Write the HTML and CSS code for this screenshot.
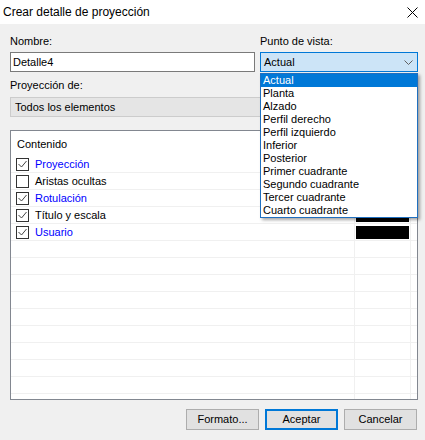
FILE: index.html
```html
<!DOCTYPE html>
<html lang="es">
<head>
<meta charset="utf-8">
<title>Crear detalle de proyección</title>
<link rel="stylesheet" href="styles.css">
</head>
<body>
<div class="window">
  <div class="titlebar">
    <span class="title">Crear detalle de proyección</span>
    <svg class="close" width="11" height="11" viewBox="0 0 11 11"><path d="M0.5 0.5 L10.5 10.5 M10.5 0.5 L0.5 10.5" stroke="#000" stroke-width="1" fill="none"/></svg>
  </div>
  <div class="form">
    <div class="toprow">
      <div class="field">
        <div class="label">Nombre:</div>
        <div class="textbox">Detalle4</div>
      </div>
      <div class="field">
        <div class="label">Punto de vista:</div>
        <div class="combo">
          <span>Actual</span>
          <svg class="chev" width="9" height="5" viewBox="0 0 9 5"><path d="M0.5 0.5 L4.5 4.5 L8.5 0.5" stroke="#606060" stroke-width="1" fill="none"/></svg>
        </div>
      </div>
    </div>
    <div class="label label2">Proyección de:</div>
    <div class="graybox">Todos los elementos</div>
    <div class="list">
      <div class="listhead">Contenido</div>
      <div class="rows">
        <div class="row"><div class="c1"><span class="cb"><svg width="11" height="11" viewBox="0 0 11 11"><path d="M1.5 5 L4.5 8 L9.5 2" stroke="#444" stroke-width="1" fill="none"/></svg></span><span class="blue">Proyección</span></div><div class="c2"><span class="sw"></span></div><div class="c3"></div></div>
        <div class="row"><div class="c1"><span class="cb"></span><span>Aristas ocultas</span></div><div class="c2"></div><div class="c3"></div></div>
        <div class="row"><div class="c1"><span class="cb"><svg width="11" height="11" viewBox="0 0 11 11"><path d="M1.5 5 L4.5 8 L9.5 2" stroke="#444" stroke-width="1" fill="none"/></svg></span><span class="blue">Rotulación</span></div><div class="c2"><span class="sw"></span></div><div class="c3"></div></div>
        <div class="row"><div class="c1"><span class="cb"><svg width="11" height="11" viewBox="0 0 11 11"><path d="M1.5 5 L4.5 8 L9.5 2" stroke="#444" stroke-width="1" fill="none"/></svg></span><span>Título y escala</span></div><div class="c2"><span class="sw"></span></div><div class="c3"></div></div>
        <div class="row"><div class="c1"><span class="cb"><svg width="11" height="11" viewBox="0 0 11 11"><path d="M1.5 5 L4.5 8 L9.5 2" stroke="#444" stroke-width="1" fill="none"/></svg></span><span class="blue">Usuario</span></div><div class="c2"><span class="sw"></span></div><div class="c3"></div></div>
        <div class="row"><div class="c1"></div><div class="c2"></div><div class="c3"></div></div>
        <div class="row"><div class="c1"></div><div class="c2"></div><div class="c3"></div></div>
        <div class="row"><div class="c1"></div><div class="c2"></div><div class="c3"></div></div>
        <div class="row"><div class="c1"></div><div class="c2"></div><div class="c3"></div></div>
        <div class="row"><div class="c1"></div><div class="c2"></div><div class="c3"></div></div>
        <div class="row"><div class="c1"></div><div class="c2"></div><div class="c3"></div></div>
        <div class="row"><div class="c1"></div><div class="c2"></div><div class="c3"></div></div>
        <div class="row"><div class="c1"></div><div class="c2"></div><div class="c3"></div></div>
        <div class="row"><div class="c1"></div><div class="c2"></div><div class="c3"></div></div>
        <div class="row"><div class="c1"></div><div class="c2"></div><div class="c3"></div></div>
      </div>
    </div>
    <div class="buttons">
      <div class="btn">Formato...</div>
      <div class="btn default">Aceptar</div>
      <div class="btn">Cancelar</div>
    </div>
  </div>
  <div class="dropdown">
    <div class="item sel">Actual</div>
    <div class="item">Planta</div>
    <div class="item">Alzado</div>
    <div class="item">Perfil derecho</div>
    <div class="item">Perfil izquierdo</div>
    <div class="item">Inferior</div>
    <div class="item">Posterior</div>
    <div class="item">Primer cuadrante</div>
    <div class="item">Segundo cuadrante</div>
    <div class="item">Tercer cuadrante</div>
    <div class="item">Cuarto cuadrante</div>
  </div>
</div>
</body>
</html>
```
FILE: styles.css
```css
* { box-sizing: border-box; }
html, body { margin: 0; padding: 0; }
body {
  background: #f0f0f0;
  font-family: "Liberation Sans", Arial, sans-serif;
  font-size: 11px;
  color: #000;
}
.window {
  position: relative;
  width: 425px;
  height: 440px;
  overflow: hidden;
  background: #f0f0f0;
}
.titlebar {
  height: 24px;
  background: #fff;
  display: flex;
  align-items: center;
  justify-content: space-between;
  padding: 0 7px 0 3px;
}
.title {
  font-family: "Liberation Sans", Arial, sans-serif;
  font-size: 12px;
  line-height: 16px;
  color: #000;
}
.close { display: block; margin-top: 1px; }
.form {
  padding: 11px 7px 0 10px;
}
.toprow {
  display: grid;
  grid-template-columns: 245px 158px;
  column-gap: 5px;
}
.label {
  line-height: 13px;
  height: 13px;
  margin-bottom: 4px;
}
.label2 { margin-top: 7px; margin-bottom: 5px; }
.textbox {
  height: 20px;
  border: 1px solid #7a7a7a;
  background: #fff;
  line-height: 18px;
  padding-left: 2px;
}
.combo {
  height: 20px;
  border: 1px solid #0078d7;
  background: #cce4f7;
  line-height: 18px;
  padding: 0 4px 0 3px;
  display: flex;
  align-items: center;
  justify-content: space-between;
}
.chev { display: block; }
.graybox {
  height: 20px;
  border: 1px solid #cccccc;
  background: #e5e5e5;
  line-height: 18px;
  padding-left: 4px;
}
.list {
  margin-top: 13px;
  height: 270px;
  border: 1px solid #828790;
  background: #fff;
  overflow: hidden;
}
.listhead {
  height: 25px;
  padding: 7px 0 0 6px;
  line-height: 13px;
}
.row {
  display: flex;
  height: 17px;
  border-bottom: 1px solid #f0f0f0;
}
.c1 {
  width: 343px;
  display: flex;
  align-items: flex-start;
  padding-left: 5px;
  line-height: 17px;
  height: 16px;
}
.c2 {
  width: 57px;
  border-left: 1px solid #f0f0f0;
  border-right: 1px solid #f0f0f0;
  padding: 2px 0 0 1px;
}
.c3 { flex: 1; }
.cb {
  width: 13px;
  height: 13px;
  border: 1px solid #333333;
  background: #fff;
  margin-top: 2px;
  margin-right: 6px;
  flex: none;
}
.cb svg { display: block; }
.blue { color: #0000ff; }
.sw {
  display: block;
  width: 53px;
  height: 13px;
  background: #000;
}
.buttons {
  margin-top: 9px;
  display: flex;
  justify-content: flex-end;
  gap: 6px;
  padding-right: 1px;
}
.btn {
  width: 73px;
  height: 21px;
  border: 1px solid #adadad;
  background: #e1e1e1;
  text-align: center;
  line-height: 19px;
}
.btn.default {
  border: 2px solid #0078d7;
  line-height: 17px;
}
.dropdown {
  position: absolute;
  left: 260px;
  top: 73px;
  width: 158px;
  height: 145px;
  background: #fff;
  border: 1px solid #1f6fbf;
  box-shadow: 2px 2px 3px rgba(0,0,0,0.35);
}
.item {
  height: 13px;
  line-height: 13px;
  padding-left: 2px;
  white-space: nowrap;
}
.item.sel {
  background: #0078d7;
  color: #fff;
}
```
